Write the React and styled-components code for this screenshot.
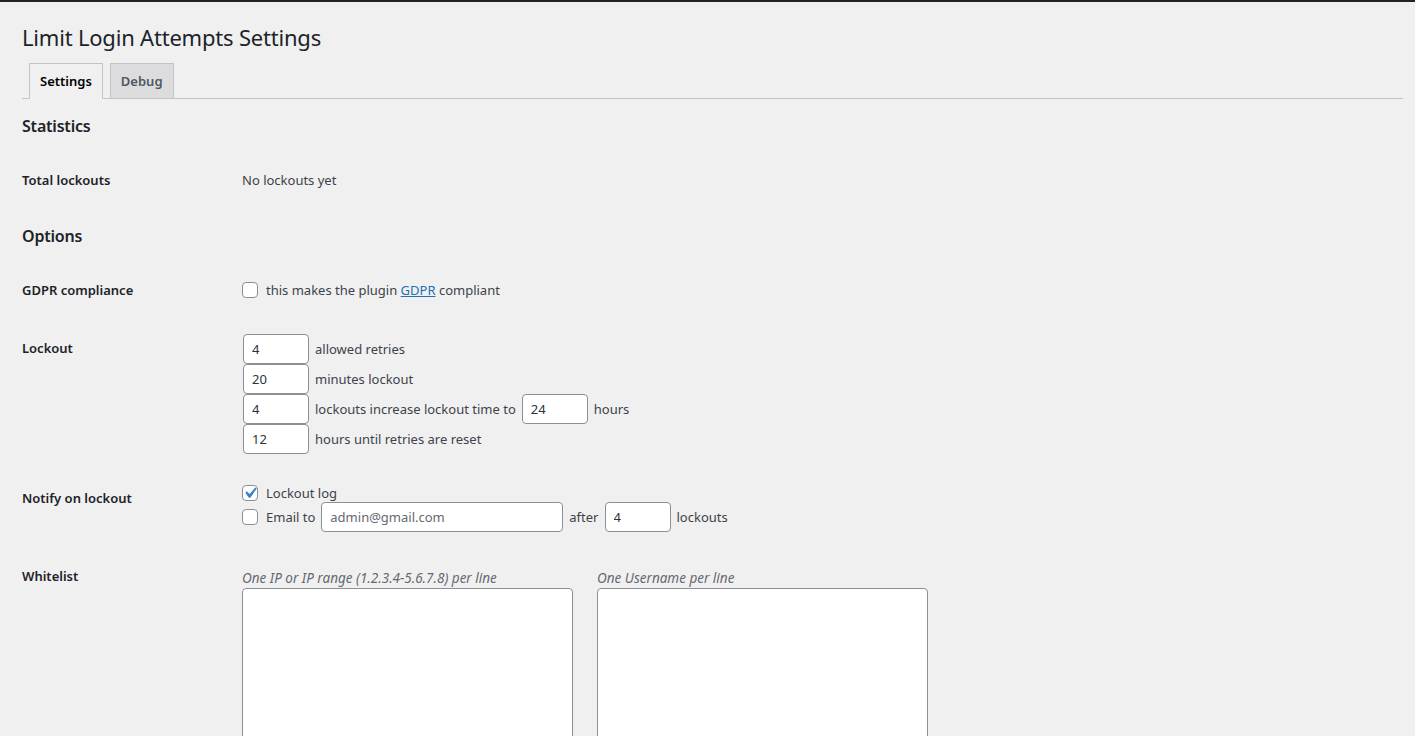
import React from "react";
import styled, { createGlobalStyle } from "styled-components";

const GlobalStyle = createGlobalStyle`
  html, body {
    margin: 0;
    padding: 0;
    background: #f0f0f1;
  }
  body {
    font-family: "Noto Sans", "Open Sans", sans-serif;
    font-size: 13px;
    color: #3c434a;
    overflow: hidden;
  }
`;

const TopBar = styled.div`
  height: 2px;
  background: #1d2327;
`;

const Wrap = styled.div`
  padding: 0 12px 0 22px;
`;

const Title = styled.h1`
  margin: 10px 0 0;
  padding: 10px 0 4px;
  font-size: 22px;
  font-weight: 400;
  letter-spacing: -0.2px;
  line-height: 30px;
  color: #1d2327;
`;

const TabBar = styled.nav`
  display: flex;
  gap: 7px;
  margin-top: 7px;
  padding-left: 7px;
  border-bottom: 1px solid #c3c4c7;
`;

const Tab = styled.a`
  display: block;
  height: 34px;
  padding: 0 10px;
  line-height: 34px;
  margin-bottom: -1px;
  border: 1px solid #c3c4c7;
  font-size: 13px;
  font-weight: 600;
  text-decoration: none;
  color: ${(p) => (p.$active ? "#000" : "#50575e")};
  background: ${(p) => (p.$active ? "#f0f0f1" : "#dcdcde")};
  border-bottom-color: ${(p) => (p.$active ? "#f0f0f1" : "#c3c4c7")};
`;

const SectionTitle = styled.h2`
  margin: 16px 0 14px;
  font-size: 16px;
  font-weight: 600;
  letter-spacing: -0.2px;
  line-height: 22px;
  color: #1d2327;
`;

const Row = styled.div`
  display: flex;
  align-items: flex-start;
`;

const Th = styled.div`
  flex: 0 0 220px;
  padding: 20px 0;
  line-height: 18px;
  font-weight: 600;
  color: #1d2327;
`;

const Td = styled.div`
  flex: 1;
  padding: ${(p) => (p.$text ? "20px 0" : "15px 0")};
  line-height: 18px;
`;

const Line = styled.div`
  display: flex;
  align-items: center;
  gap: 5px;
  height: ${(p) => p.$h || 30}px;
`;

const Input = styled.input`
  box-sizing: border-box;
  margin: 0 1px;
  height: 30px;
  width: ${(p) => p.$w || 66}px;
  padding: 0 8px;
  border: 1px solid #8c8f94;
  border-radius: 4px;
  background: #fff;
  font-family: inherit;
  font-size: 13px;
  color: #2c3338;
  outline: none;

  &::placeholder {
    color: #646970;
  }
`;

const Box = styled.span`
  position: relative;
  box-sizing: border-box;
  flex: 0 0 16px;
  width: 16px;
  height: 16px;
  margin-right: 3px;
  border: 1px solid #8c8f94;
  border-radius: 4px;
  background: #fff;

  svg {
    position: absolute;
    left: -4px;
    top: -4px;
    width: 22px;
    height: 22px;
  }
`;

const Link = styled.a`
  color: #2271b1;
  text-decoration: underline;
`;

const Columns = styled.div`
  display: flex;
  gap: 24px;
`;

const Column = styled.div`
  display: flex;
  flex-direction: column;
  width: 331px;
`;

const Hint = styled.div`
  padding-top: 7px;
  margin-bottom: 1px;
  line-height: 18px;
  font-size: 13.5px;
  font-style: italic;
  color: #646970;
`;

const TextArea = styled.textarea`
  box-sizing: border-box;
  width: 331px;
  height: 200px;
  margin: 0;
  border: 1px solid #8c8f94;
  border-radius: 4px;
  background: #fff;
  resize: none;
  outline: none;
`;

function Checkbox({ checked }) {
  return (
    <Box>
      {checked && (
        <svg viewBox="0 0 20 20">
          <path
            d="M14.83 4.89l1.34.94-5.81 8.38H9.02L5.78 9.67l1.34-1.25 2.57 2.4z"
            fill="#3582c4"
          />
        </svg>
      )}
    </Box>
  );
}

export default function App() {
  return (
    <>
      <GlobalStyle />
      <TopBar />
      <Wrap>
        <Title>Limit Login Attempts Settings</Title>
        <TabBar>
          <Tab $active>Settings</Tab>
          <Tab>Debug</Tab>
        </TabBar>

        <SectionTitle>Statistics</SectionTitle>
        <Row>
          <Th>Total lockouts</Th>
          <Td $text>No lockouts yet</Td>
        </Row>

        <SectionTitle>Options</SectionTitle>
        <Row>
          <Th>GDPR compliance</Th>
          <Td>
            <Line $h={28}>
              <Checkbox />
              <span>
                this makes the plugin <Link>GDPR</Link> compliant
              </span>
            </Line>
          </Td>
        </Row>

        <Row>
          <Th>Lockout</Th>
          <Td>
            <Line>
              <Input defaultValue="4" />
              <span>allowed retries</span>
            </Line>
            <Line>
              <Input defaultValue="20" />
              <span>minutes lockout</span>
            </Line>
            <Line>
              <Input defaultValue="4" />
              <span>lockouts increase lockout time to</span>
              <Input defaultValue="24" />
              <span>hours</span>
            </Line>
            <Line>
              <Input defaultValue="12" />
              <span>hours until retries are reset</span>
            </Line>
          </Td>
        </Row>

        <Row>
          <Th>Notify on lockout</Th>
          <Td>
            <Line $h={18}>
              <Checkbox checked />
              <span>Lockout log</span>
            </Line>
            <Line>
              <Checkbox />
              <span>Email to</span>
              <Input $w={242} placeholder="admin@gmail.com" />
              <span>after</span>
              <Input defaultValue="4" />
              <span>lockouts</span>
            </Line>
          </Td>
        </Row>

        <Row>
          <Th>Whitelist</Th>
          <Td>
            <Columns>
              <Column>
                <Hint>One IP or IP range (1.2.3.4-5.6.7.8) per line</Hint>
                <TextArea />
              </Column>
              <Column>
                <Hint>One Username per line</Hint>
                <TextArea />
              </Column>
            </Columns>
          </Td>
        </Row>
      </Wrap>
    </>
  );
}
